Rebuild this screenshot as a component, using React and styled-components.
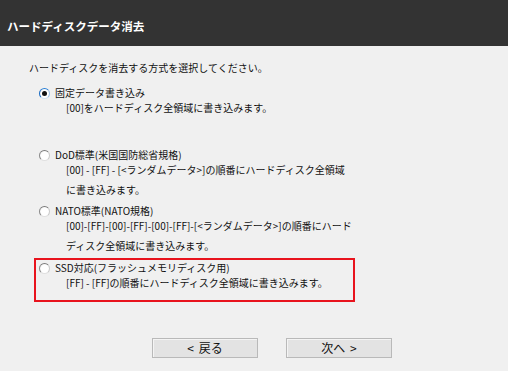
import styled, { createGlobalStyle } from "styled-components";

const GlobalStyle = createGlobalStyle`
  html, body {
    margin: 0;
    padding: 0;
    background: #f0f0f0;
  }
  body {
    font-family: "Noto Sans CJK JP", "Noto Sans", sans-serif;
    color: #111;
  }
`;

const options = [
  {
    id: "fixed",
    label: "固定データ書き込み",
    lines: ["[00]をハードディスク全領域に書き込みます。"],
    checked: true,
    top: 11,
  },
  {
    id: "dod",
    label: "DoD標準(米国国防総省規格)",
    lines: [
      "[00] - [FF] - [<ランダムデータ>]の順番にハードディスク全領域",
      "に書き込みます。",
    ],
    top: 30,
  },
  {
    id: "nato",
    label: "NATO標準(NATO規格)",
    lines: [
      "[00]-[FF]-[00]-[FF]-[00]-[FF]-[<ランダムデータ>]の順番にハード",
      "ディスク全領域に書き込みます。",
    ],
    top: 4,
  },
  {
    id: "ssd",
    label: "SSD対応(フラッシュメモリディスク用)",
    lines: ["[FF] - [FF]の順番にハードディスク全領域に書き込みます。"],
    top: 2,
    highlight: true,
  },
];

const App = () => {
  return (
    <>
      <GlobalStyle />
      <Window>
        <TitleBar>ハードディスクデータ消去</TitleBar>
        <Body>
          <Instruction>ハードディスクを消去する方式を選択してください。</Instruction>
          {options.map((opt) => (
            <Option key={opt.id} $top={opt.top} $highlight={opt.highlight}>
              <OptionRow>
                <Radio $checked={opt.checked} />
                <Label>{opt.label}</Label>
              </OptionRow>
              <Desc>
                {opt.lines.map((line) => (
                  <div key={line}>{line}</div>
                ))}
              </Desc>
            </Option>
          ))}
          <ButtonRow>
            <Button>&lt; 戻る</Button>
            <Button>次へ &gt;</Button>
          </ButtonRow>
        </Body>
      </Window>
    </>
  );
};

export default App;

const Window = styled.div`
  width: 508px;
  height: 371px;
  background: #f0f0f0;
  overflow: hidden;
`;

const TitleBar = styled.div`
  height: 46px;
  box-sizing: border-box;
  padding: 5px 0 0 7px;
  display: flex;
  align-items: center;
  background: #333333;
  color: #fff;
  font-size: 11.5px;
  font-weight: 700;
`;

const Body = styled.div`
  padding: 15px 0 0 29px;
`;

const Instruction = styled.div`
  font-size: 10px;
  line-height: 14px;
`;

const Option = styled.div`
  margin-top: ${(p) => p.$top}px;
  margin-left: ${(p) => (p.$highlight ? 5 : 10)}px;
  padding: ${(p) => (p.$highlight ? "1px 0 7px 3px" : "0")};
  width: ${(p) => (p.$highlight ? "314px" : "auto")};
  border: ${(p) => (p.$highlight ? "2px solid #e8131d" : "none")};
`;

const OptionRow = styled.div`
  display: flex;
  align-items: center;
  height: 14px;
`;

const Radio = styled.span`
  width: 11px;
  height: 11px;
  box-sizing: border-box;
  border-radius: 50%;
  border: 1px solid #8f8f8f;
  border-color: #7a7a7a #c8c8c8 #e0e0e0 #8a8a8a;
  background: radial-gradient(circle at 60% 60%, #fff 55%, #e4e4e4 100%);
  margin-right: 5px;
  position: relative;
  flex-shrink: 0;
  ${(p) =>
    p.$checked &&
    `
    border-color: #2a7fd4 #9ac0e8 #d0e2f4 #1a6cc4;
    &::after {
      content: "";
      position: absolute;
      left: 2px;
      top: 2px;
      width: 5px;
      height: 5px;
      border-radius: 50%;
      background: #111;
    }
  `}
`;

const Label = styled.span`
  font-size: 10px;
  line-height: 14px;
  white-space: nowrap;
`;

const Desc = styled.div`
  margin-top: -2px;
  margin-left: 27px;
  font-size: 10px;
  line-height: 20px;
  white-space: nowrap;
`;

const ButtonRow = styled.div`
  display: flex;
  gap: 28px;
  margin-top: 36px;
  margin-left: 123px;
`;

const Button = styled.button`
  width: 106px;
  height: 20px;
  padding: 0;
  box-sizing: border-box;
  border: 1px solid #b9b9b9;
  background-color: #e3e3e3;
  background-image: radial-gradient(#d6d6d6 0.5px, transparent 0.6px);
  background-size: 2px 2px;
  box-shadow: inset 1px 1px 0 #f4f4f4;
  font-family: "Noto Sans CJK JP", sans-serif;
  font-size: 12px;
  line-height: 18px;
  color: #111;
  word-spacing: 2px;
`;
